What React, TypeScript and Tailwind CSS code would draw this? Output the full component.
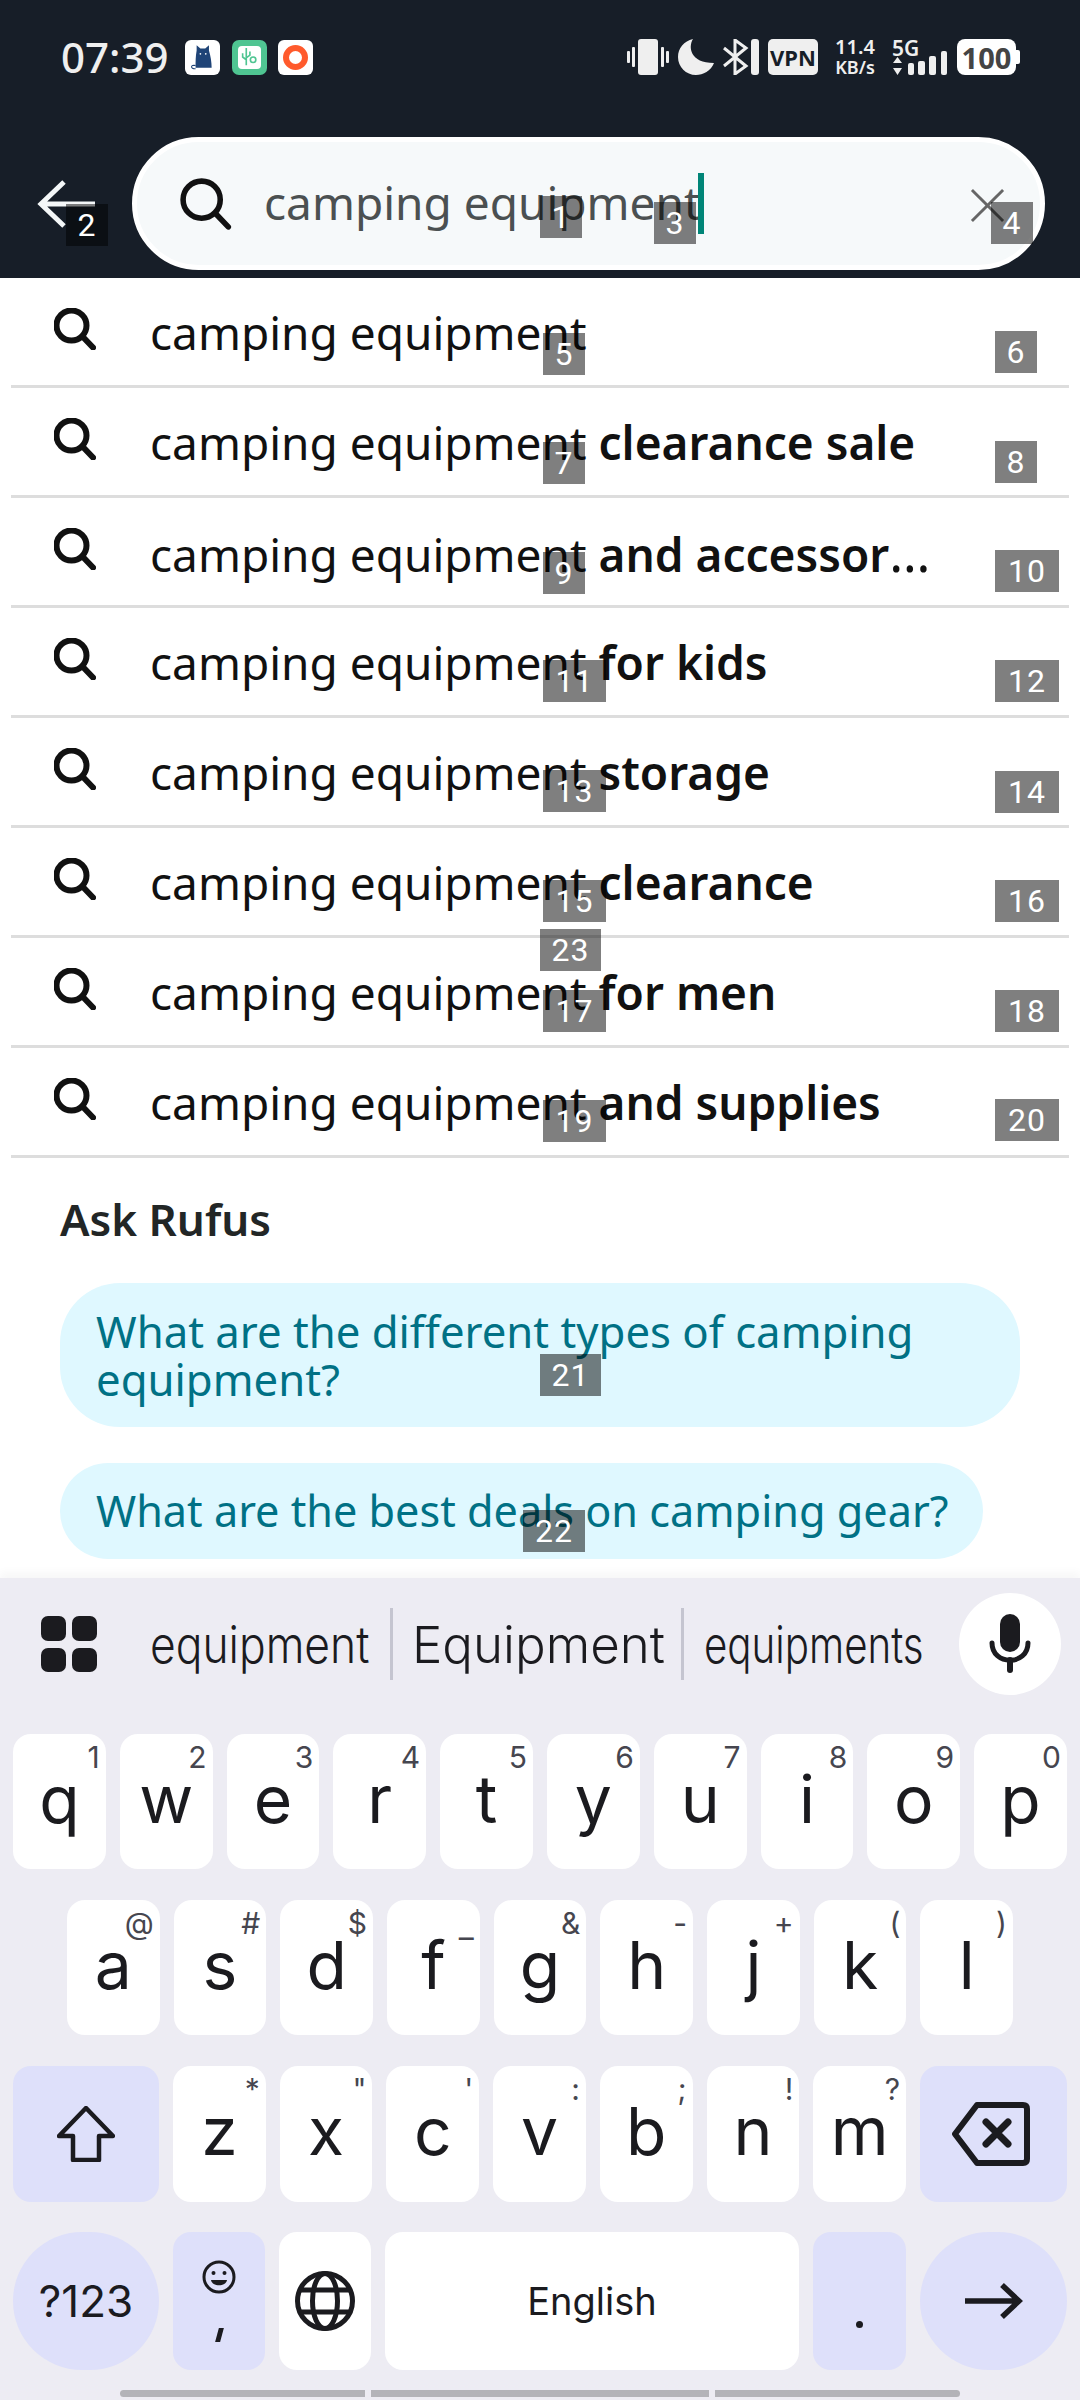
import { ReactNode } from "react";

const FONT = "[font-family:'Noto_Sans',sans-serif]";
const KB_FONT = "[font-family:Inter,sans-serif]";

const SUGGESTIONS = [
  "",
  "clearance sale",
  "and accessor…",
  "for kids",
  "storage",
  "clearance",
  "for men",
  "and supplies",
];

const SearchIcon = ({ className, stroke = 6 }: { className: string; stroke?: number }) => (
  <svg viewBox="0 0 42 42" className={className} fill="none" stroke="currentColor" strokeLinecap="round">
    <circle cx="17.5" cy="17.5" r="15" strokeWidth={stroke} />
    <path d="M28.5 28.5 L39 39.5" strokeWidth={stroke} />
  </svg>
);

const Badge = ({ n, className }: { n: number; className: string }) => (
  <div
    className={`absolute z-10 flex h-[42px] items-center justify-center bg-black/50 text-[32px] font-normal leading-none tracking-[1px] text-white [font-family:Roboto,sans-serif] ${className}`}
  >
    {n}
  </div>
);

const Row = ({ suffix }: { suffix: string }) => {
  const clipped = suffix.endsWith("…");
  return (
    <div className="mx-[11px] flex h-[110px] items-center border-b-[3px] border-[#dddddd] pl-[43px]">
      <SearchIcon className="mb-[6px] h-[42px] w-[42px] text-[#111111]" />
      <div className={`ml-[54px] whitespace-nowrap text-[46px] leading-none text-[#111111] ${FONT}`}>
        camping equipment{suffix ? " " : ""}
        <span className="font-semibold">{clipped ? suffix.slice(0, -1) : suffix}</span>
        {clipped && <span className="text-[52px] leading-none">…</span>}
      </div>
    </div>
  );
};

const Key = ({ label, hint, hintClass }: { label: string; hint: string; hintClass?: string }) => (
  <div className="relative flex flex-1 items-center justify-center rounded-[18px] bg-white text-[66px] leading-none text-[#1b1b1f]">
    <span className="mb-[6px]">{label}</span>
    <span className={`absolute right-[6px] text-[30px] leading-none text-[#46464f] ${hintClass ?? "top-[8px]"}`}>{hint}</span>
  </div>
);

const FnKey = ({ children, className }: { children: ReactNode; className: string }) => (
  <div className={`flex items-center justify-center bg-[#dee0fa] text-[#1b1b1f] ${className}`}>{children}</div>
);

const StatusIcons = () => (
  <div className="ml-auto flex items-center text-[#efefef]">
    {/* vibrate */}
    <svg viewBox="0 0 42 36" className="h-[36px] w-[42px]" fill="currentColor">
      <rect x="11" y="0" width="20" height="36" rx="3" />
      <rect x="5" y="8" width="3" height="20" rx="1" />
      <rect x="34" y="8" width="3" height="20" rx="1" />
      <rect x="0" y="12" width="3" height="12" rx="1" />
      <rect x="39" y="12" width="3" height="12" rx="1" />
    </svg>
    {/* moon */}
    <svg viewBox="0 0 36 36" className="ml-[9px] h-[36px] w-[36px]" fill="currentColor">
      <path d="M15 0 C10 8 12 24 36 24 C33 32 25 36 18 36 C8 36 0 28 0 18 C0 9 6 2 15 0 Z" />
    </svg>
    {/* bluetooth */}
    <svg viewBox="0 0 36 36" className="ml-[9px] h-[36px] w-[36px]" fill="none" stroke="currentColor" strokeWidth="3">
      <path d="M1 9 L23 27 L12 35 L12 1 L23 9 L1 27" />
      <rect x="28" y="0" width="8" height="36" rx="3" fill="currentColor" stroke="none" />
    </svg>
    <div className={`ml-[9px] flex h-[36px] w-[50px] items-center justify-center rounded-[5px] bg-[#efefef] text-[22px] font-bold leading-none text-[#171e28] ${FONT}`}>
      VPN
    </div>
    <div className={`ml-[15px] flex w-[44px] flex-col items-center text-[20px] font-semibold leading-[20px] ${FONT}`}>
      <span>11.4</span>
      <span className="text-[18px]">KB/s</span>
    </div>
    <div className="ml-[15px] flex w-[56px] flex-col">
      <span className={`text-[21px] font-semibold leading-[18px] ${FONT}`}>5G</span>
      <svg viewBox="0 0 56 18" className="h-[18px] w-[56px] overflow-visible" fill="currentColor">
        <path d="M5.5 0 L10 6 L1 6 Z M5.5 18 L10 11 L1 11 Z" />
        <rect x="16" y="6" width="6" height="12" rx="2" />
        <rect x="26" y="4" width="7" height="14" rx="2" />
        <rect x="37" y="-1" width="7" height="19" rx="2" />
        <rect x="49" y="-6" width="6" height="24" rx="2" />
      </svg>
    </div>
    <div className="ml-[9px] flex items-center">
      <div className={`flex h-[36px] w-[59px] items-center justify-center rounded-[8px] bg-white text-[29px] font-bold leading-none text-[#444444] ${FONT}`}>
        100
      </div>
      <div className="h-[14px] w-[4px] rounded-r-[2px] bg-white" />
    </div>
  </div>
);

const App = () => {
  return (
    <div className={`relative flex h-[2400px] w-[1080px] flex-col overflow-hidden bg-white ${FONT}`}>
      {/* header */}
      <div className="flex h-[278px] flex-col bg-[#171e28]">
        <div className="flex items-center pl-[61px] pr-[60px] pt-[37px]">
          <span className="text-[42px] font-medium leading-[36px] text-[#efefef]">07:39</span>
          <div className="ml-[16px] flex h-[35px] w-[35px] items-center justify-center rounded-[6px] bg-white">
            <svg viewBox="0 0 28 28" className="h-[30px] w-[30px]">
              <path d="M9 8 L9 3 L12.5 6 L17 6 L20.5 3 L20.5 8 C22 13 23 19 23 24 L8 24 C8 19 8 13 9 8 Z" fill="#1f4477" />
              <path d="M8 22 C3 21 3 25 8 25" fill="none" stroke="#1f4477" strokeWidth="1" />
              <circle cx="12.5" cy="11" r="0.8" fill="#ffffff" />
              <circle cx="17.5" cy="11" r="0.8" fill="#ffffff" />
            </svg>
          </div>
          <div className="ml-[12px] flex h-[35px] w-[35px] items-center justify-center rounded-[7px] bg-[#4fc592]">
            <div className="flex h-[23px] w-[23px] items-center justify-center rounded-[4px] bg-white">
              <svg viewBox="0 0 22 22" className="h-[20px] w-[20px]" fill="none" stroke="#4fc592" strokeWidth="1.8">
                <path d="M8 1 V20 M4 7 V11 L8 14 M12 5 V9 L8 12" />
                <circle cx="15.5" cy="14" r="3" />
              </svg>
            </div>
          </div>
          <div className="ml-[11px] flex h-[35px] w-[35px] items-center justify-center rounded-[6px] bg-white">
            <div className="h-[25px] w-[25px] rounded-full border-[6px] border-[#ff5a2c]" />
          </div>
          <StatusIcons />
        </div>
        <div className="mt-[60px] flex items-center">
          <svg viewBox="0 0 58 48" className="ml-[37px] h-[48px] w-[58px] text-[#f4f7f8]" fill="none" stroke="currentColor" strokeWidth="5">
            <path d="M27 2 L4 24 L27 46 M4 24 H58" />
          </svg>
          <div className="ml-[37px] flex h-[133px] w-[913px] items-center rounded-full border-[5px] border-white bg-[#f6f9fa]">
            <SearchIcon stroke={4.5} className="ml-[43px] h-[52px] w-[52px] text-[#111111]" />
            <span className="mb-[4px] ml-[32px] text-[46px] leading-none text-[#4b5051]">camping equipment</span>
            <div className="ml-[-3px] h-[61px] w-[6px] bg-[#008577]" />
            <svg viewBox="0 0 36 36" className="ml-[266px] mt-[4px] h-[35px] w-[35px] text-[#666666]" fill="none" stroke="currentColor" strokeWidth="3">
              <path d="M2 2 L34 34 M34 2 L2 34" />
            </svg>
          </div>
        </div>
      </div>

      {/* suggestions */}
      <div className="flex flex-col">
        {SUGGESTIONS.map((suffix, i) => (
          <Row key={i} suffix={suffix} />
        ))}
      </div>

      {/* ask rufus */}
      <div className="flex flex-col items-start px-[60px] pt-[36px]">
        <h2 className="text-[44px] font-semibold leading-[50px] text-[#222626]">Ask Rufus</h2>
        <div className="mt-[39px] w-[960px] rounded-[60px] bg-[#dff8ff] py-[24px] pl-[36px] pr-[30px] text-[43.7px] leading-[48px] text-[#007185]">
          What are the different types of camping equipment?
        </div>
        <div className="mt-[36px] rounded-full bg-[#dff8ff] py-[24px] pl-[36px] pr-[35px] text-[43.2px] leading-[48px] text-[#007185]">
          What are the best deals on camping gear?
        </div>
      </div>

      {/* keyboard */}
      <div className={`absolute inset-x-0 bottom-0 flex h-[822px] flex-col bg-[#edecf3] shadow-[0_-6px_8px_rgba(0,0,0,0.03)] ${KB_FONT}`}>
        <div className="flex h-[156px] items-center pb-[24px] text-[51px] font-light leading-none text-[#1b1b1f]">
          <svg viewBox="0 0 56 56" className="ml-[41px] h-[56px] w-[56px]" fill="#1b1b1f">
            <rect x="0" y="0" width="25" height="25" rx="7" />
            <rect x="31" y="0" width="25" height="25" rx="7" />
            <rect x="0" y="32" width="25" height="24" rx="7" />
            <rect x="31" y="32" width="25" height="24" rx="7" />
          </svg>
          <span className="ml-[53px] w-[217px] origin-left scale-x-[0.87] whitespace-nowrap">equipment</span>
          <div className="ml-[23px] h-[72px] w-[3px] bg-[#c5c5d0]" />
          <span className="ml-[19px] w-[247px] whitespace-nowrap">Equipment</span>
          <div className="ml-[22px] h-[72px] w-[3px] bg-[#c5c5d0]" />
          <span className="ml-[20px] w-[217px] origin-left scale-x-[0.79] whitespace-nowrap">equipments</span>
          <div className="ml-[38px] flex h-[102px] w-[102px] items-center justify-center rounded-full bg-white">
            <svg viewBox="0 0 42 60" className="h-[60px] w-[42px]" fill="none" stroke="#1b1b1f">
              <rect x="11" y="0" width="20" height="38" rx="10" fill="#1b1b1f" stroke="none" />
              <path d="M3 29 C3 52 39 52 39 29" strokeWidth="5" strokeLinecap="round" />
              <path d="M21 46 V56" strokeWidth="6" strokeLinecap="round" />
            </svg>
          </div>
        </div>
        <div className="flex h-[135px] gap-[14px] px-[13px]">
          {[["q", "1"], ["w", "2"], ["e", "3"], ["r", "4"], ["t", "5"], ["y", "6"], ["u", "7"], ["i", "8"], ["o", "9"], ["p", "0"]].map(([l, h]) => (
            <Key key={l} label={l} hint={h} />
          ))}
        </div>
        <div className="mt-[31px] flex h-[135px] gap-[14px] px-[67px]">
          {[["a", "@"], ["s", "#"], ["d", "$"]].map(([l, h]) => (
            <Key key={l} label={l} hint={h} />
          ))}
          <Key label="f" hint="–" hintClass="top-[22px]" />
          {[["g", "&"], ["h", "-"], ["j", "+"], ["k", "("], ["l", ")"]].map(([l, h]) => (
            <Key key={l} label={l} hint={h} />
          ))}
        </div>
        <div className="mt-[31px] flex h-[136px] gap-[14px] px-[13px]">
          <FnKey className="w-[146px] rounded-[18px]">
            <svg viewBox="0 0 58 56" className="h-[56px] w-[58px]" fill="none" stroke="#1b1b1f" strokeWidth="4.5" strokeLinejoin="round">
              <path d="M29 2 L56 30 H42 V54 H16 V30 H2 Z" />
            </svg>
          </FnKey>
          {[["z", "*"], ["x", '"'], ["c", "'"], ["v", ":"], ["b", ";"], ["n", "!"], ["m", "?"]].map(([l, h]) => (
            <Key key={l} label={l} hint={h} />
          ))}
          <FnKey className="w-[147px] rounded-[18px]">
            <svg viewBox="0 0 78 64" className="mr-[5px] h-[64px] w-[78px]" fill="none" stroke="#1b1b1f" strokeWidth="6" strokeLinecap="round" strokeLinejoin="round">
              <path d="M25 3 H71 Q75 3 75 7 V57 Q75 61 71 61 H25 L3 32 Z" />
              <path d="M34 20 L56 42 M56 20 L34 42" strokeWidth="7" />
            </svg>
          </FnKey>
        </div>
        <div className="mt-[30px] flex h-[138px] gap-[14px] px-[13px]">
          <FnKey className="w-[146px] rounded-full text-[44px] leading-none">?123</FnKey>
          <FnKey className="w-[92px] flex-col rounded-[18px]">
            <svg viewBox="0 0 34 34" className="mb-[34px] h-[34px] w-[34px]" fill="none" stroke="#1b1b1f" strokeWidth="3">
              <circle cx="17" cy="17" r="15" />
              <circle cx="11.5" cy="13" r="2" fill="#1b1b1f" stroke="none" />
              <circle cx="22.5" cy="13" r="2" fill="#1b1b1f" stroke="none" />
              <path d="M9 20 H25 C24 27 10 27 9 20 Z" fill="#1b1b1f" stroke="none" />
            </svg>
            <span className="h-[14px] w-[5px] skew-x-[-15deg] bg-[#1b1b1f]" />
          </FnKey>
          <div className="flex w-[92px] items-center justify-center rounded-[18px] bg-white">
            <svg viewBox="0 0 60 62" className="h-[62px] w-[60px]" fill="none" stroke="#1b1b1f" strokeWidth="5">
              <circle cx="30" cy="31" r="27.5" />
              <ellipse cx="30" cy="31" rx="12.5" ry="27.5" />
              <path d="M4 20 H56 M4 42 H56" />
            </svg>
          </div>
          <div className="flex w-[414px] items-center justify-center rounded-[18px] bg-white text-[38px] font-normal leading-none text-[#1b1b1f]">
            English
          </div>
          <FnKey className="w-[93px] rounded-[18px]">
            <span className="mt-[46px] h-[7px] w-[7px] rounded-full bg-[#1b1b1f]" />
          </FnKey>
          <FnKey className="w-[147px] rounded-full">
            <svg viewBox="0 0 58 36" className="h-[36px] w-[58px]" fill="none" stroke="#1b1b1f" strokeWidth="5.5">
              <path d="M0 18 H54 M37 2 L54 18 L37 34" />
            </svg>
          </FnKey>
        </div>
        <div className="mt-[20px] flex justify-center gap-[6px]">
          <div className="h-[7px] w-[245px] rounded-l-full bg-[#b3b3b8]" />
          <div className="h-[7px] w-[338px] bg-[#b3b3b8]" />
          <div className="h-[7px] w-[245px] rounded-r-full bg-[#b3b3b8]" />
        </div>
      </div>

      {/* numbered markers over the page */}
      <Badge n={1} className="left-[540px] top-[196px] w-[42px]" />
      <Badge n={2} className="left-[66px] top-[204px] w-[42px]" />
      <Badge n={3} className="left-[654px] top-[202px] w-[42px]" />
      <Badge n={4} className="left-[991px] top-[202px] w-[42px]" />
      <Badge n={5} className="left-[543px] top-[333px] w-[42px]" />
      <Badge n={6} className="left-[995px] top-[331px] w-[42px]" />
      <Badge n={7} className="left-[543px] top-[442px] w-[42px]" />
      <Badge n={8} className="left-[995px] top-[441px] w-[42px]" />
      <Badge n={9} className="left-[543px] top-[552px] w-[42px]" />
      <Badge n={10} className="left-[995px] top-[550px] w-[64px]" />
      <Badge n={11} className="left-[543px] top-[660px] w-[63px]" />
      <Badge n={12} className="left-[995px] top-[660px] w-[64px]" />
      <Badge n={13} className="left-[543px] top-[770px] w-[63px]" />
      <Badge n={14} className="left-[995px] top-[771px] w-[64px]" />
      <Badge n={15} className="left-[543px] top-[880px] w-[63px]" />
      <Badge n={16} className="left-[995px] top-[880px] w-[64px]" />
      <Badge n={23} className="left-[540px] top-[929px] w-[61px]" />
      <Badge n={17} className="left-[543px] top-[990px] w-[63px]" />
      <Badge n={18} className="left-[995px] top-[990px] w-[64px]" />
      <Badge n={19} className="left-[543px] top-[1100px] w-[63px]" />
      <Badge n={20} className="left-[995px] top-[1099px] w-[64px]" />
      <Badge n={21} className="left-[540px] top-[1354px] w-[61px]" />
      <Badge n={22} className="left-[523px] top-[1510px] w-[62px]" />
    </div>
  );
};

export default App;
